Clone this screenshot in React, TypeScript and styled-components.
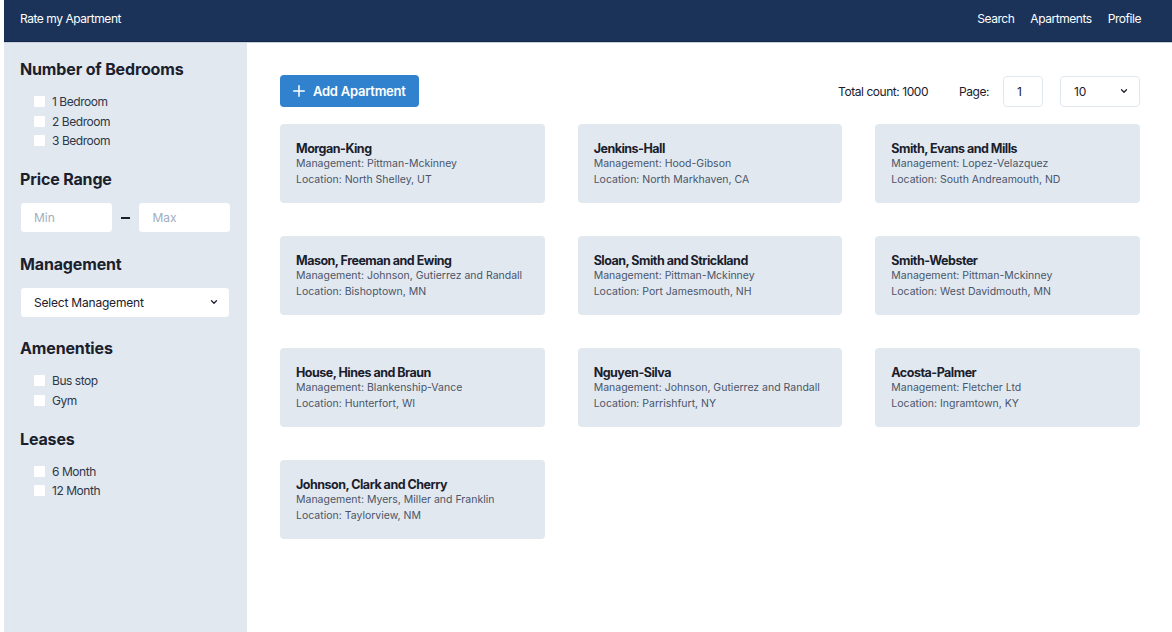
import React from "react";
import styled, { createGlobalStyle } from "styled-components";

const GlobalStyle = createGlobalStyle`
  * { box-sizing: border-box; }
  html, body { margin: 0; padding: 0; background: #ffffff; }
  body { font-family: Inter, "Noto Sans", sans-serif; color: #1a202c; }
`;

const Page = styled.div`
  margin-left: 4px;
  min-height: 632px;
  display: flex;
  flex-direction: column;
`;

const Header = styled.header`
  height: 42px;
  background: #1b3358;
  border-bottom: 1px solid #12264a;
  box-shadow: 0 1px 0 #c9d2de;
  display: flex;
  align-items: center;
  justify-content: space-between;
  padding: 0 31px 0 16px;
  color: #ffffff;
  font-size: 12px;
  letter-spacing: -0.45px;
  position: relative;
  z-index: 1;
`;

const Brand = styled.div`
  padding-bottom: 4px;
`;

const Nav = styled.nav`
  display: flex;
  gap: 16px;
  padding-bottom: 4px;
`;

const NavLink = styled.span`
  color: #ffffff;
`;

const Body = styled.div`
  flex: 1;
  display: flex;
`;

const Sidebar = styled.aside`
  width: 243px;
  flex-shrink: 0;
  background: #e2e8f0;
  padding: 15px 16px 16px 16px;
  display: flex;
  flex-direction: column;
  gap: 16.5px;
`;

const Section = styled.section<{ $field?: boolean }>`
  display: flex;
  flex-direction: column;
  gap: 11px;
  padding-bottom: ${(p) => (p.$field ? "2px" : "0")};
`;

const Heading = styled.h2`
  margin: 0;
  font-size: 16px;
  line-height: 24px;
  font-weight: 700;
  color: #1a202c;
  letter-spacing: -0.15px;
`;

const CheckList = styled.div`
  display: flex;
  flex-direction: column;
  padding-left: 14px;
`;

const CheckRow = styled.label`
  height: 19.5px;
  display: flex;
  align-items: center;
  gap: 7px;
  font-size: 12px;
  color: #2d3748;
  letter-spacing: -0.45px;
`;

const Box = styled.span`
  width: 11px;
  height: 11px;
  background: #ffffff;
  border-radius: 1px;
  display: inline-block;
`;

const RangeRow = styled.div`
  display: flex;
  align-items: center;
  gap: 7px;
`;

const TextInput = styled.div<{ $w?: string }>`
  width: ${(p) => p.$w || "93px"};
  height: 31px;
  background: #ffffff;
  border: 1px solid #e2e8f0;
  border-radius: 4px;
  display: flex;
  align-items: center;
  padding: 0 13px;
  font-size: 12px;
  color: #1a202c;
`;

const Placeholder = styled.span`
  color: #a0aec0;
`;

const Dash = styled.span`
  width: 10px;
  height: 2px;
  background: #1a202c;
  display: inline-block;
  margin: 0 1px;
`;

const SelectBox = styled.div<{ $w?: string }>`
  width: ${(p) => p.$w || "210px"};
  height: 31px;
  background: #ffffff;
  border: 1px solid #e2e8f0;
  border-radius: 4px;
  display: flex;
  align-items: center;
  justify-content: space-between;
  padding: 0 10px 0 13px;
  font-size: 12px;
  color: #1a202c;
  letter-spacing: -0.2px;
`;

const Main = styled.main`
  flex: 1;
  padding: 33px 32px 32px 33px;
  display: flex;
  flex-direction: column;
  gap: 17px;
`;

const Toolbar = styled.div`
  display: flex;
  align-items: center;
  justify-content: space-between;
`;

const AddButton = styled.button`
  height: 32px;
  background: #3182ce;
  color: #ffffff;
  border: none;
  border-radius: 4px;
  padding: 0 13px 0 12px;
  display: flex;
  align-items: center;
  gap: 7px;
  font-family: Inter, sans-serif;
  font-size: 13px;
  font-weight: 600;
  letter-spacing: -0.25px;
`;

const Pager = styled.div`
  display: flex;
  align-items: center;
  font-size: 12px;
  color: #1a202c;
  letter-spacing: -0.45px;
`;

const Count = styled.span`
  margin-right: 31px;
`;

const PageLabel = styled.span`
  margin-right: 14px;
`;

const PageInput = styled(TextInput)`
  width: 40px;
  margin-right: 17px;
`;

const Grid = styled.div`
  display: grid;
  grid-template-columns: repeat(3, 1fr);
  column-gap: 33px;
  row-gap: 33px;
`;

const Card = styled.div`
  height: 79px;
  background: #e2e8f0;
  border-radius: 4px;
  padding: 16px 16px;
`;

const CardTitle = styled.div`
  font-size: 12.5px;
  line-height: 16px;
  font-weight: 700;
  color: #1a202c;
  letter-spacing: -0.5px;
  padding-top: 1px;
  margin-bottom: -1px;
`;

const CardLine = styled.div`
  font-size: 10.5px;
  line-height: 16px;
  color: #4a5568;
  letter-spacing: 0px;
`;

const Chevron = () => (
  <svg width="10" height="10" viewBox="0 0 24 24" fill="none" stroke="#1a202c" strokeWidth="3" strokeLinecap="round" strokeLinejoin="round">
    <polyline points="6 9 12 15 18 9" />
  </svg>
);

const Plus = () => (
  <svg width="14" height="14" viewBox="0 0 24 24" fill="none" stroke="#ffffff" strokeWidth="2.6" strokeLinecap="round">
    <line x1="12" y1="3" x2="12" y2="21" />
    <line x1="3" y1="12" x2="21" y2="12" />
  </svg>
);

const apartments = [
  { name: "Morgan-King", mgmt: "Pittman-Mckinney", loc: "North Shelley, UT" },
  { name: "Jenkins-Hall", mgmt: "Hood-Gibson", loc: "North Markhaven, CA" },
  { name: "Smith, Evans and Mills", mgmt: "Lopez-Velazquez", loc: "South Andreamouth, ND" },
  { name: "Mason, Freeman and Ewing", mgmt: "Johnson, Gutierrez and Randall", loc: "Bishoptown, MN" },
  { name: "Sloan, Smith and Strickland", mgmt: "Pittman-Mckinney", loc: "Port Jamesmouth, NH" },
  { name: "Smith-Webster", mgmt: "Pittman-Mckinney", loc: "West Davidmouth, MN" },
  { name: "House, Hines and Braun", mgmt: "Blankenship-Vance", loc: "Hunterfort, WI" },
  { name: "Nguyen-Silva", mgmt: "Johnson, Gutierrez and Randall", loc: "Parrishfurt, NY" },
  { name: "Acosta-Palmer", mgmt: "Fletcher Ltd", loc: "Ingramtown, KY" },
  { name: "Johnson, Clark and Cherry", mgmt: "Myers, Miller and Franklin", loc: "Taylorview, NM" },
];

const CheckGroup = ({ items }: { items: string[] }) => (
  <CheckList>
    {items.map((i) => (
      <CheckRow key={i}>
        <Box />
        {i}
      </CheckRow>
    ))}
  </CheckList>
);

export default function App() {
  return (
    <>
      <GlobalStyle />
      <Page>
        <Header>
          <Brand>Rate my Apartment</Brand>
          <Nav>
            <NavLink>Search</NavLink>
            <NavLink>Apartments</NavLink>
            <NavLink>Profile</NavLink>
          </Nav>
        </Header>
        <Body>
          <Sidebar>
            <Section>
              <Heading>Number of Bedrooms</Heading>
              <CheckGroup items={["1 Bedroom", "2 Bedroom", "3 Bedroom"]} />
            </Section>
            <Section $field>
              <Heading>Price Range</Heading>
              <RangeRow>
                <TextInput><Placeholder>Min</Placeholder></TextInput>
                <Dash />
                <TextInput><Placeholder>Max</Placeholder></TextInput>
              </RangeRow>
            </Section>
            <Section $field>
              <Heading>Management</Heading>
              <SelectBox>
                Select Management
                <Chevron />
              </SelectBox>
            </Section>
            <Section>
              <Heading>Amenenties</Heading>
              <CheckGroup items={["Bus stop", "Gym"]} />
            </Section>
            <Section>
              <Heading>Leases</Heading>
              <CheckGroup items={["6 Month", "12 Month"]} />
            </Section>
          </Sidebar>
          <Main>
            <Toolbar>
              <AddButton>
                <Plus />
                Add Apartment
              </AddButton>
              <Pager>
                <Count>Total count: 1000</Count>
                <PageLabel>Page:</PageLabel>
                <PageInput>1</PageInput>
                <SelectBox $w="80px">
                  10
                  <Chevron />
                </SelectBox>
              </Pager>
            </Toolbar>
            <Grid>
              {apartments.map((a) => (
                <Card key={a.name}>
                  <CardTitle>{a.name}</CardTitle>
                  <CardLine>Management: {a.mgmt}</CardLine>
                  <CardLine>Location: {a.loc}</CardLine>
                </Card>
              ))}
            </Grid>
          </Main>
        </Body>
      </Page>
    </>
  );
}
